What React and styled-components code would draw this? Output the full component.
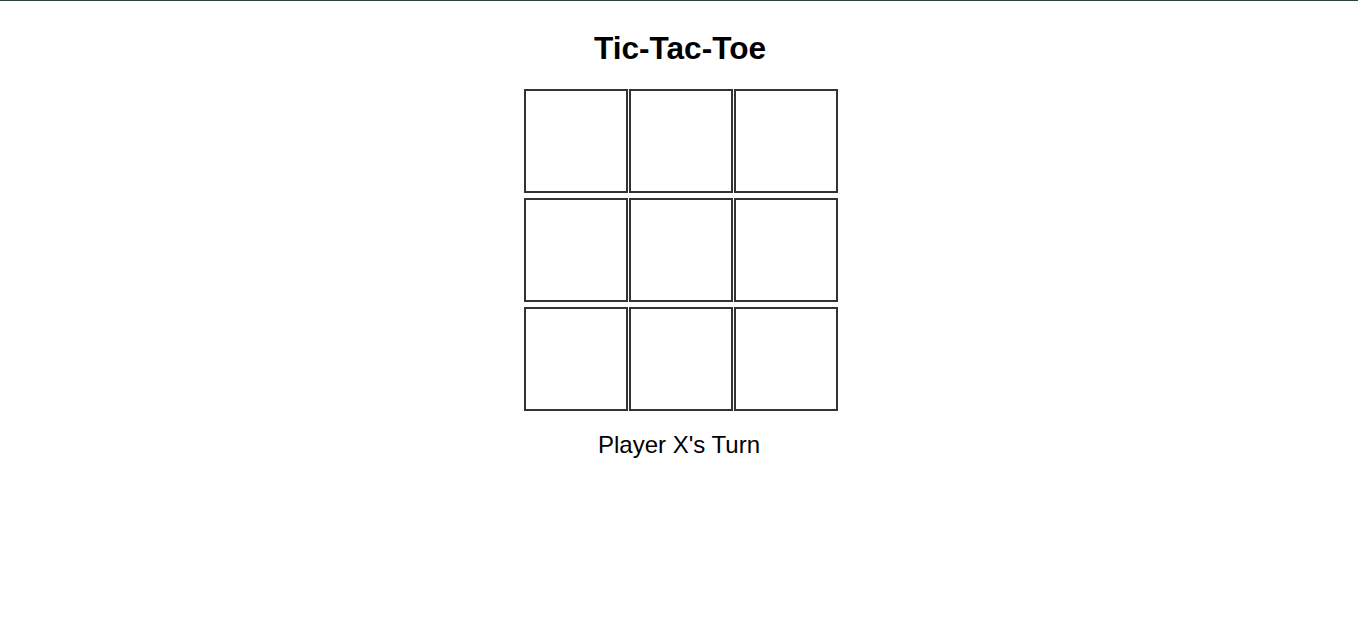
import React, { useState } from "react";
import styled, { createGlobalStyle } from "styled-components";

const Global = createGlobalStyle`
  html, body { margin: 0; padding: 0; background: #fff; }
  body { font-family: "Liberation Sans", Arial, sans-serif; color: #000; }
`;

const Page = styled.div`
  border-top: 1px solid #2f3f3a;
  display: flex;
  flex-direction: column;
  align-items: center;
  min-height: 630px;
`;

const Title = styled.h1`
  font-size: 31.6px;
  font-weight: bold;
  margin: 29px 0 22px;
  line-height: 37px;
  padding-left: 2px;
`;

const Board = styled.div`
  display: grid;
  grid-template-columns: repeat(3, 104px);
  grid-auto-rows: 104px;
  column-gap: 1px;
  row-gap: 5px;
  margin-left: 3px;
`;

const Cell = styled.button`
  box-sizing: border-box;
  width: 104px;
  height: 104px;
  border: 2px solid #333;
  background: #fff;
  padding: 0;
  font-family: "Liberation Sans", Arial, sans-serif;
  font-size: 48px;
  font-weight: bold;
  cursor: pointer;
`;

const Status = styled.p`
  font-size: 24px;
  line-height: 28px;
  margin: 20px 0 0;
`;

export default function App() {
  const [cells, setCells] = useState(Array(9).fill(""));
  const [turn, setTurn] = useState("X");
  const play = (i) => {
    if (cells[i]) return;
    const next = cells.slice();
    next[i] = turn;
    setCells(next);
    setTurn(turn === "X" ? "O" : "X");
  };
  return (
    <>
      <Global />
      <Page>
        <Title>Tic-Tac-Toe</Title>
        <Board>
          {cells.map((c, i) => (
            <Cell key={i} onClick={() => play(i)}>
              {c}
            </Cell>
          ))}
        </Board>
        <Status>Player {turn}'s Turn</Status>
      </Page>
    </>
  );
}
